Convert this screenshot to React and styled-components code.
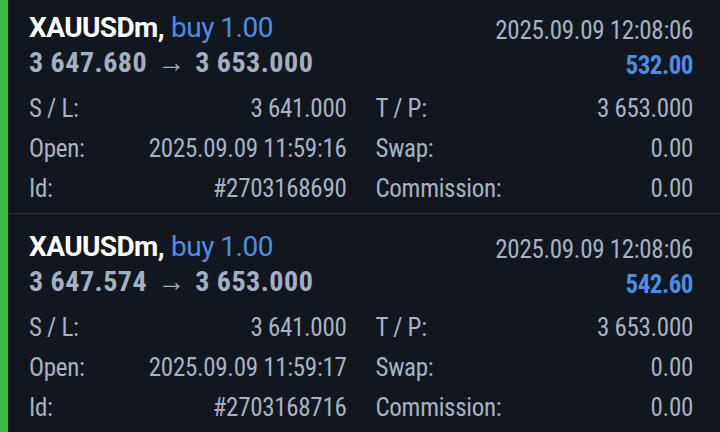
import React from "react";
import styled, { createGlobalStyle } from "styled-components";

const GlobalStyle = createGlobalStyle`
  html, body {
    margin: 0;
    padding: 0;
    background: #12171f;
    overflow: hidden;
  }
  body {
    font-family: "Roboto Condensed", Roboto, "Liberation Sans", sans-serif;
  }
`;

const Page = styled.div`
  width: 720px;
  height: 432px;
  display: flex;
  background: #12171f;
  overflow: hidden;
`;

const SideBar = styled.div`
  width: 8px;
  flex: none;
  background: #3cb84b;
`;

const List = styled.div`
  flex: 1;
  display: flex;
  flex-direction: column;
`;

const Card = styled.div`
  padding: 16px 27px 4px 21px;
  border-bottom: 1px solid #2c323c;

  &:first-child {
    padding-top: 11px;
  }
`;

const Header = styled.div`
  display: flex;
  justify-content: space-between;
  align-items: flex-start;
`;

const HeaderLeft = styled.div`
  display: flex;
  flex-direction: column;
`;

const HeaderRight = styled.div`
  display: flex;
  flex-direction: column;
  align-items: flex-end;
  padding-top: 3px;
`;

const Title = styled.div`
  font-family: Roboto, "Liberation Sans", sans-serif;
  font-size: 28px;
  line-height: 34px;
  white-space: nowrap;
`;

const Symbol = styled.span`
  color: #ffffff;
  font-weight: 700;
  letter-spacing: -0.6px;
`;

const Side = styled.span`
  color: #4a8fe3;
  font-weight: 400;
  letter-spacing: -0.5px;
`;

const Prices = styled.div`
  display: flex;
  align-items: baseline;
  gap: 10px;
  font-size: 28px;
  line-height: 35px;
  font-weight: 700;
  letter-spacing: 0.5px;
  color: #a4b0c2;
  white-space: nowrap;
`;

const Arrow = styled.span`
  font-weight: 400;
  font-size: 28px;
  letter-spacing: 0;
`;

const Time = styled.div`
  font-size: 25px;
  line-height: 34px;
  letter-spacing: -0.3px;
  color: #a7b2c2;
  white-space: nowrap;
`;

const Profit = styled.div`
  font-size: 25px;
  line-height: 35px;
  font-weight: 700;
  letter-spacing: -0.5px;
  color: #4a8fe3;
`;

const Details = styled.div`
  display: grid;
  grid-template-columns: 1fr 1fr;
  column-gap: 29px;
  margin-top: 6px;
`;

const Field = styled.div`
  display: flex;
  justify-content: space-between;
  font-size: 25px;
  line-height: 40px;
  letter-spacing: -0.3px;
  color: #a7b2c2;
  white-space: nowrap;
`;

const positions = [
  {
    open: "3 647.680",
    close: "3 653.000",
    time: "2025.09.09 12:08:06",
    profit: "532.00",
    sl: "3 641.000",
    tp: "3 653.000",
    openTime: "2025.09.09 11:59:16",
    swap: "0.00",
    id: "#2703168690",
    commission: "0.00",
  },
  {
    open: "3 647.574",
    close: "3 653.000",
    time: "2025.09.09 12:08:06",
    profit: "542.60",
    sl: "3 641.000",
    tp: "3 653.000",
    openTime: "2025.09.09 11:59:17",
    swap: "0.00",
    id: "#2703168716",
    commission: "0.00",
  },
];

const Position = ({ p }) => (
  <Card>
    <Header>
      <HeaderLeft>
        <Title>
          <Symbol>XAUUSDm,</Symbol> <Side>buy 1.00</Side>
        </Title>
        <Prices>
          <span>{p.open}</span>
          <Arrow>→</Arrow>
          <span>{p.close}</span>
        </Prices>
      </HeaderLeft>
      <HeaderRight>
        <Time>{p.time}</Time>
        <Profit>{p.profit}</Profit>
      </HeaderRight>
    </Header>
    <Details>
      <Field><span>S / L:</span><span>{p.sl}</span></Field>
      <Field><span>T / P:</span><span>{p.tp}</span></Field>
      <Field><span>Open:</span><span>{p.openTime}</span></Field>
      <Field><span>Swap:</span><span>{p.swap}</span></Field>
      <Field><span>Id:</span><span>{p.id}</span></Field>
      <Field><span>Commission:</span><span>{p.commission}</span></Field>
    </Details>
  </Card>
);

export default function App() {
  return (
    <>
      <GlobalStyle />
      <Page>
        <SideBar />
        <List>
          {positions.map((p) => (
            <Position key={p.id} p={p} />
          ))}
        </List>
      </Page>
    </>
  );
}
